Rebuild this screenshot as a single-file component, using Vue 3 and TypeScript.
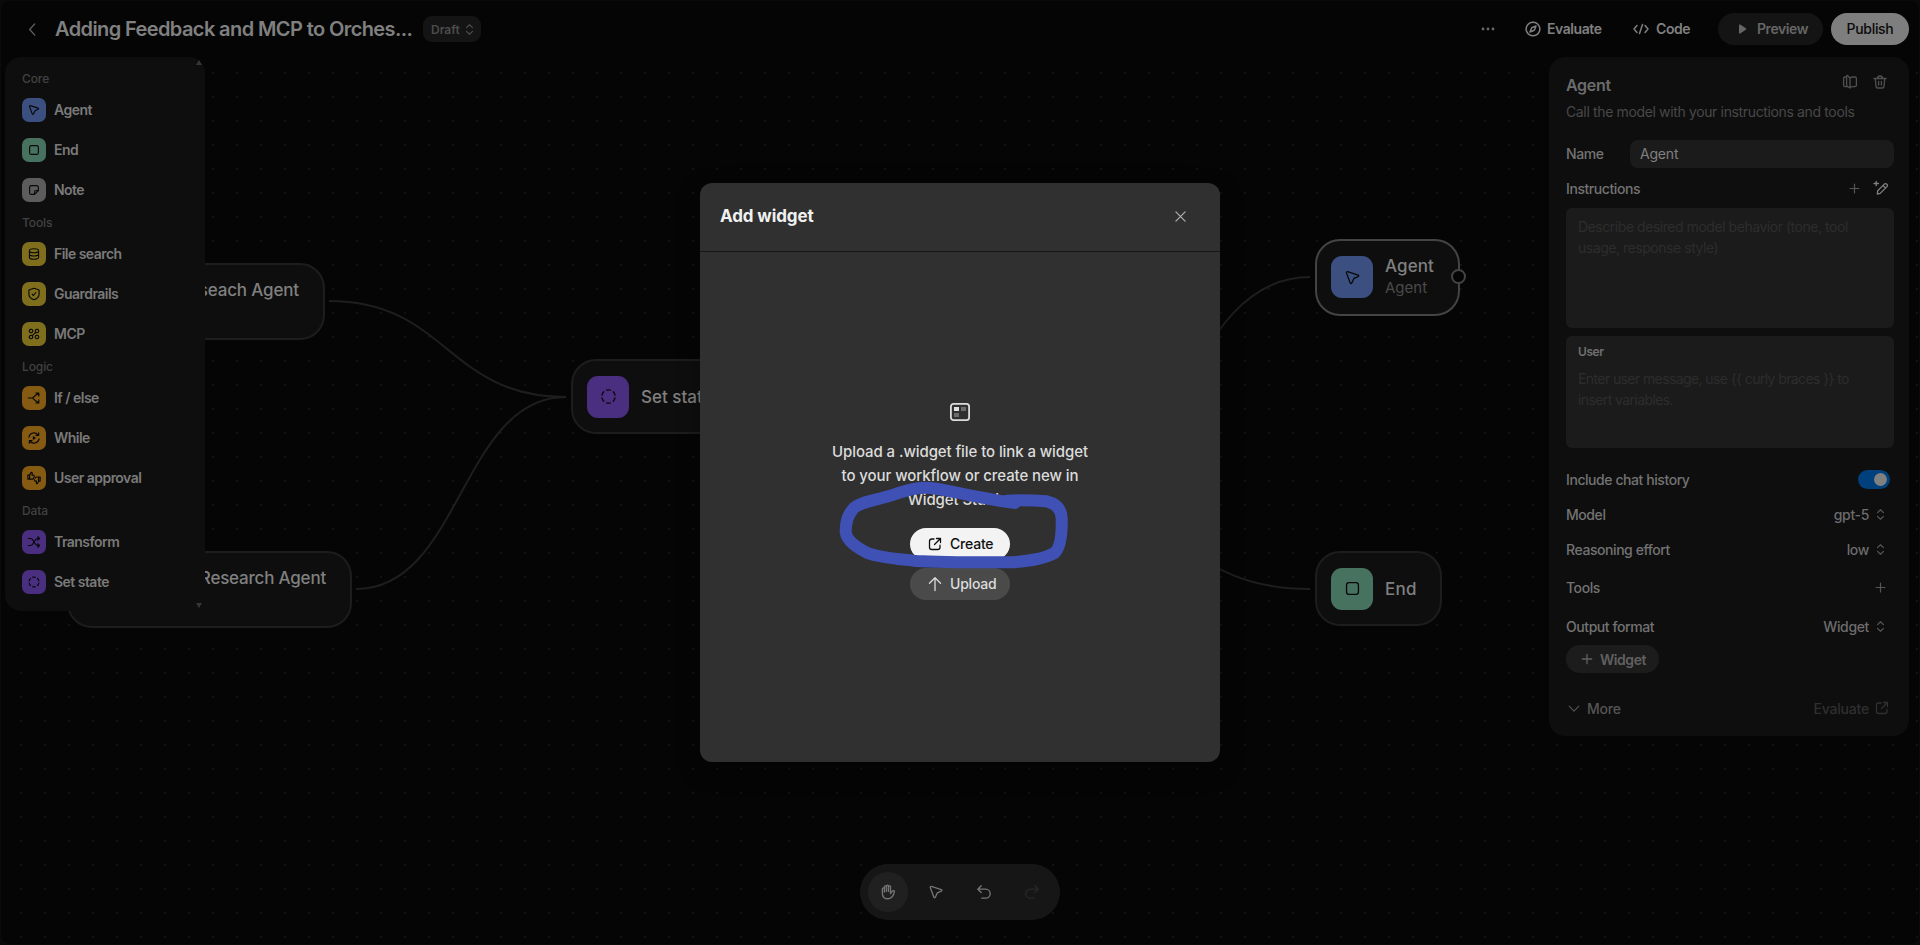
<script setup lang="ts">
interface Item { label: string; icon: string; tone: string }
interface Group { title: string; items: Item[] }

const groups: Group[] = [
  { title: 'Core', items: [
    { label: 'Agent', icon: 'cursor', tone: 'blue' },
    { label: 'End', icon: 'square', tone: 'green' },
    { label: 'Note', icon: 'note', tone: 'gray' },
  ] },
  { title: 'Tools', items: [
    { label: 'File search', icon: 'db', tone: 'yellow' },
    { label: 'Guardrails', icon: 'shield', tone: 'yellow' },
    { label: 'MCP', icon: 'mcp', tone: 'yellow' },
  ] },
  { title: 'Logic', items: [
    { label: 'If / else', icon: 'branch', tone: 'orange' },
    { label: 'While', icon: 'loop', tone: 'orange' },
    { label: 'User approval', icon: 'thumbs', tone: 'orange' },
  ] },
  { title: 'Data', items: [
    { label: 'Transform', icon: 'shuffle', tone: 'purple' },
    { label: 'Set state', icon: 'dashed', tone: 'purple' },
  ] },
]

// 16 × 16 stroke paths
const icons: Record<string, string> = {
  cursor: 'M3.9 3 12.7 5.9Q13.8 6.5 12.7 7.2L9.2 8.8 7.4 12.6Q6.7 13.6 6.1 12.6L2.9 4.1Q2.8 2.9 3.9 3Z',
  square: 'M5 3H11Q13 3 13 5V11Q13 13 11 13H5Q3 13 3 11V5Q3 3 5 3Z',
  note: 'M8.6 13H5Q3 13 3 11V5Q3 3 5 3H11Q13 3 13 5V8.6L8.6 13V10.4Q8.6 8.6 10.4 8.6H13',
  db: 'M2.800 4.300C2.800 2.900 5 2 8 2s5.200.9 5.200 2.300-2.200 2.300-5.200 2.300-5.200-.9-5.200-2.300V11.700c0 1.400 2.200 2.300 5.200 2.300s5.200-.9 5.200-2.300V4.300M2.800 8c0 1.400 2.200 2.300 5.200 2.300s5.200-.9 5.200-2.300',
  shield: 'M8 1.500 13.800 3.500V8.200C13.800 11.300 11.200 13.400 8 14.600 4.800 13.400 2.200 11.300 2.200 8.200V3.500ZM6 8.300 7.400 9.700 10 6.300',
  mcp: 'M4.600 2.600a2 2 0 1 0 .01 0M11.400 2.600a2 2 0 1 0 .01 0M4.600 9.400a2 2 0 1 0 .01 0M11.400 9.400a2 2 0 1 0 .01 0M9.900 6.100 6.100 9.900',
  branch: 'M1.500 8H6.500L9 5.500 13.300 2.500M6.500 8 9 10.500 13.300 13.500M10 2.300H13.500V5.800M10 13.700H13.500V10.200',
  loop: 'M2.200 7A5.900 5.900 0 0 1 12.900 4.700M13.800 9A5.900 5.900 0 0 1 3.100 11.300M13.300 2V5H10.300M2.700 14V11H5.700M7.300 6.700V9.300L9.300 8Z',
  thumbs: 'M1 4.800V9.300H6.200Q7.500 9.300 7.800 8L8.200 6Q8.300 4.700 7 4.700H5.700L6 2.500Q5.700 1 4.600 1.800L3 4.700H1M3 4.800V9.300M15 11.200V6.800H11Q9.800 6.800 9.500 8M8.600 10Q8.300 11.500 9.600 11.500H10.900L10.600 13.700Q10.900 15.100 11.900 14.300L13.400 11.500H15M13.200 6.800V11.500',
  shuffle: 'M1.500 4H3.700Q5.200 4 6.100 5L10 10.800Q10.800 12 12.300 12H14M1.500 12H3.700Q5.200 12 6.100 11L10 5.200Q10.800 4 12.300 4H14M12.200 2 14.300 4 12.200 6M12.200 10 14.300 12 12.200 14',
  dashed: 'M6.400 2.600A5.600 5.600 0 0 1 9.600 2.600M12 4A5.600 5.600 0 0 1 13.500 6.800M13.500 9.200A5.600 5.600 0 0 1 12 12M9.600 13.400A5.600 5.600 0 0 1 6.400 13.400M4 12A5.600 5.600 0 0 1 2.500 9.200M2.500 6.800A5.600 5.600 0 0 1 4 4',
  updown: 'M4.800 6 8 3 11.200 6M4.800 10 8 13 11.200 10',
  plus: 'M8 3.300V12.700M3.300 8H12.700',
  external: 'M7 3H4.800Q2.500 3 2.500 5.300V11.200Q2.500 13.500 4.800 13.500H10.700Q13 13.500 13 11.200V9.200M9.500 2.500H13.500V6.500M13.500 2.500 7.500 8.500',
  undo: 'M5.500 2.500 2.500 5.500 5.500 8.500M2.500 5.500H9.500A4 4 0 0 1 9.500 13.500H6',
  redo: 'M10.500 2.500 13.500 5.500 10.500 8.500M13.500 5.500H6.500A4 4 0 0 0 6.500 13.500H10',
  hand: 'M3 9V5.200Q3 4.300 3.900 4.300T4.800 5.200V8M4.800 7.500V3.500Q4.800 2.600 5.700 2.600T6.600 3.500V7.500M6.600 7V2.800Q6.600 1.900 7.500 1.900T8.400 2.800V7.500M8.400 7V3.400Q8.400 2.500 9.300 2.500T10.200 3.400V9.500M10.200 9.300 11.800 7.200Q13 6.300 13.700 7.300 12.600 14 8.200 14 3 14 3 9',
  trash: 'M2 4.500H14M5.500 4.300Q5.500 2 8 2T10.500 4.300M3.300 4.700 4 12.300Q4.200 14 5.800 14H10.200Q11.800 14 12 12.300L12.700 4.700M6.600 7.500V11M9.400 7.500V11',
  book: 'M5.800 1.600Q4.600 1 4.600 2.500V11Q4.600 12 5.500 12.500L8 14V4.600ZM4.600 3H3Q1.600 3 1.600 4.400V11.200Q1.600 12.600 3 12.600H5.500M8 4.600Q8.300 3 10 3H13Q14.400 3 14.400 4.400V11.200Q14.400 12.600 13 12.600H10Q8.400 12.600 8 14',
  magic: 'M4.300 14.200 4.700 10.800 11.300 4.100Q12.500 3.100 13.800 4.200T13.700 6.900L7.200 13.400ZM10 5.500 12.400 7.900M3.200 1.300V5.700M1 3.500H5.400',
  compass: 'M8 1.200a6.800 6.800 0 1 0 .01 0M11 5 9.300 9.300 5 11 6.700 6.700Z',
  code: 'M4 4.500 1 8 4 11.500M12 4.500 15 8 12 11.500M9.500 3.500 6.500 12.500',
}

const settings = [
  { label: 'Model', value: 'gpt-5' },
  { label: 'Reasoning effort', value: 'low' },
]
const userHint = 'Enter user message, use {{ curly braces }} to insert variables.'
</script>

<template>
  <div class="screen">
    <main class="canvas">
      <div class="dots"></div>
      <svg class="edges" width="1920" height="945" viewBox="0 0 1920 945">
        <path d="M329 301C447 301 447 397 566 397" />
        <path d="M356 589C461 589 461 397 566 397" />
        <path d="M1054 503C1182 503 1182 277 1310 277" />
        <path d="M1054 503C1182 503 1182 589 1310 589" />
      </svg>
      <div class="node research-a"><div class="ntext"><b>Reseach Agent</b></div></div>
      <div class="node research-b"><div class="ntext"><b>Research Agent</b></div></div>
      <div class="node state">
        <span class="tile purple"><svg viewBox="0 0 16 16"><path :d="icons.dashed" /></svg></span>
        <div class="ntext"><b>Set state</b></div>
      </div>
      <div class="node agent">
        <span class="tile blue"><svg viewBox="0 0 16 16"><path :d="icons.cursor" /></svg></span>
        <div class="ntext"><b>Agent</b><small>Agent</small></div>
        <i class="port"></i>
      </div>
      <div class="node end">
        <span class="tile green"><svg viewBox="0 0 16 16"><path :d="icons.square" /></svg></span>
        <div class="ntext"><b>End</b></div>
      </div>
    </main>

    <div class="chrome">
      <header class="top">
        <svg class="back" viewBox="0 0 8 14"><path d="M7 1 1.500 7 7 13" /></svg>
        <h1>Adding Feedback and MCP to Orches...</h1>
        <span class="draft">Draft <svg viewBox="0 0 16 16"><path :d="icons.updown" /></svg></span>
        <div class="actions">
          <svg class="more" viewBox="0 0 14 4"><circle cx="2" cy="2" r="1.400" /><circle cx="7" cy="2" r="1.400" /><circle cx="12" cy="2" r="1.400" /></svg>
          <span class="act ev"><svg viewBox="0 0 16 16"><path :d="icons.compass" /></svg><em>Evaluate</em></span>
          <span class="act cd"><svg viewBox="0 0 16 16"><path :d="icons.code" /></svg><em>Code</em></span>
          <button class="preview"><svg viewBox="0 0 8 10"><path d="M.5 1.300Q.5 0 1.700.6L7.300 4.200Q8.200 5 7.300 5.800L1.700 9.400Q.5 10 .5 8.700Z" /></svg><em>Preview</em></button>
          <button class="publish"><em>Publish</em></button>
        </div>
      </header>

      <div class="body">
        <aside class="palette">
          <section v-for="g in groups" :key="g.title">
            <h2>{{ g.title }}</h2>
            <div v-for="i in g.items" :key="i.label" class="item">
              <span class="chip" :class="i.tone"><svg viewBox="0 0 16 16"><path :d="icons[i.icon]" /></svg></span>
              <span class="cap">{{ i.label }}</span>
            </div>
          </section>
          <i class="arrow up"></i><i class="arrow down"></i>
        </aside>

        <aside class="props">
          <div class="phead">
            <h3>Agent</h3>
            <svg viewBox="0 0 16 16"><path :d="icons.book" /></svg>
            <svg viewBox="0 0 16 16"><path :d="icons.trash" /></svg>
          </div>
          <p class="desc">Call the model with your instructions and tools</p>
          <div class="row name"><label>Name</label><div class="input">Agent</div></div>
          <div class="row instr"><label>Instructions</label>
            <svg class="plus" viewBox="0 0 16 16"><path :d="icons.plus" /></svg>
            <svg class="magic" viewBox="0 0 16 16"><path :d="icons.magic" /></svg>
          </div>
          <div class="area first">Describe desired model behavior (tone, tool usage, response style)</div>
          <div class="area second"><strong>User</strong>{{ userHint }}</div>
          <div class="row chat"><label>Include chat history</label><span class="toggle"><i></i></span></div>
          <div v-for="s in settings" :key="s.label" class="row set">
            <label>{{ s.label }}</label><span class="val">{{ s.value }}</span>
            <svg class="ud" viewBox="0 0 16 16"><path :d="icons.updown" /></svg>
          </div>
          <div class="row tools"><label>Tools</label><svg class="plus last" viewBox="0 0 16 16"><path :d="icons.plus" /></svg></div>
          <div class="row out"><label>Output format</label><span class="val">Widget</span>
            <svg class="ud" viewBox="0 0 16 16"><path :d="icons.updown" /></svg>
          </div>
          <div class="wbtn"><svg viewBox="0 0 16 16"><path :d="icons.plus" /></svg><span>Widget</span></div>
          <div class="row foot">
            <svg class="chev" viewBox="0 0 12 8"><path d="M.5 1.200 6 7 11.500 1.200" /></svg><span>More</span>
            <span class="eval">Evaluate</span><svg class="ext" viewBox="0 0 16 16"><path :d="icons.external" /></svg>
          </div>
        </aside>
      </div>
    </div>

    <nav class="dock">
      <span class="on"><svg viewBox="0 0 16 16"><path :d="icons.hand" /></svg></span>
      <span><svg viewBox="0 0 16 16"><path :d="icons.cursor" /></svg></span>
      <span><svg viewBox="0 0 16 16"><path :d="icons.undo" /></svg></span>
      <span class="off"><svg viewBox="0 0 16 16"><path :d="icons.redo" /></svg></span>
    </nav>

    <div class="modal">
      <div class="mhead"><h2>Add widget</h2><svg viewBox="0 0 12 12"><path d="M1 1 11 11M11 1 1 11" /></svg></div>
      <div class="mbody">
        <svg class="widget" viewBox="0 0 20 18">
          <rect x=".9" y=".9" width="18.200" height="16.200" rx="2.600" />
          <path class="hi" d="M4 4H9V8H4Z" /><path class="lo" d="M11 4H16V8H11ZM4 10H9V14H4Z" />
        </svg>
        <p><span>Upload a .widget file to link a widget</span><span>to your workflow or create new in</span><span>Widget Studio.</span></p>
        <button class="create"><svg viewBox="0 0 16 16"><path :d="icons.external" /></svg><em>Create</em></button>
        <button class="upload"><svg viewBox="0 0 16 16"><path d="M8 14.500V2M2.500 7.300 8 1.800 13.500 7.300" /></svg><em>Upload</em></button>
      </div>
    </div>

    <svg class="marker" viewBox="0 0 840 720">
      <path d="M585 369C540 365 490 352 450 346C400 336 350 323 318 323C265 323 245 338 205 349C160 362 115 368 100 386C80 408 77 430 77 456C80 485 115 505 145 520C190 535 250 538 290 543C370 548 500 547 580 547C620 543 670 538 705 518C724 498 726 450 725 415C724 385 705 370 680 364C640 361 600 360 560 362" />
    </svg>
  </div>
</template>

<style>
body { margin: 0; background: #0a0a0a; overflow: hidden; }
</style>

<style scoped>
.screen { position: relative; width: 1920px; height: 945px; overflow: hidden; background: #0a0a0a; font-family: Inter, "Liberation Sans", sans-serif; font-size: 14px; font-weight: 500; color: #808080; letter-spacing: -.2px; box-sizing: border-box; }
.screen * { box-sizing: border-box; }
h1, h2, h3, p { margin: 0; }
em, i { font-style: normal; }
svg { display: block; fill: none; stroke: currentColor; stroke-width: 1.300; stroke-linecap: round; stroke-linejoin: round; flex: none; }
button { border: 0; padding: 0; font: inherit; color: inherit; letter-spacing: inherit; display: flex; align-items: center; }
button em { padding-bottom: 1px; }

.canvas { position: absolute; inset: 1px; border-radius: 9px; background: #050505; overflow: hidden; }
.dots { height: 100%; margin-top: 59px; background-image: radial-gradient(circle, #121212 0, #121212 .7px, transparent 1.100px); background-size: 24px 24px; background-position: 8px 1px; }
.edges { position: absolute; left: -1px; top: -1px; stroke: #1e1e1e; stroke-width: 2; stroke-linecap: butt; }
.node { position: absolute; margin: -1px; display: flex; align-items: center; gap: 12px; padding-left: 14px; background: #0e0e0e; border: 2px solid #1d1d1d; border-radius: 25px; }
.ntext { display: flex; flex-direction: column; letter-spacing: 0; }
.ntext b { font-size: 17px; line-height: 22px; font-weight: 500; letter-spacing: 0; white-space: nowrap; }
.ntext small { font-size: 15px; line-height: 20px; font-weight: 400; color: #4a4a4a; }
.research-a { left: 100px; top: 263px; width: 225px; height: 77px; justify-content: flex-end; padding: 0 24px 24px 0; }
.research-b { left: 67px; top: 551px; width: 285px; height: 77px; justify-content: flex-end; padding: 0 24px 24px 0; }
.research-a b { letter-spacing: -.15px; }
.research-b b { letter-spacing: -.2px; }
.state { left: 571px; top: 359px; width: 170px; height: 75px; }
.agent { left: 1315px; top: 239px; width: 145px; height: 77px; border-color: #444; padding-bottom: 1px; }
.agent small { padding-top: 1px; }
.agent .ntext { padding-bottom: 1px; }
.agent b { letter-spacing: .1px; }
.end { left: 1315px; top: 551px; width: 127px; height: 75px; }
.end b { letter-spacing: .3px; }
.tile { width: 42px; height: 42px; border-radius: 11px; display: grid; place-items: center; color: #080808; }
.tile svg { width: 19px; height: 19px; stroke-width: 1.100; }
.port { position: absolute; right: -8px; top: 28px; width: 15px; height: 15px; border-radius: 50%; border: 2px solid #444; background: #050505; }
.blue { background: #3b5080; } .green { background: #47725f; } .gray { background: #5c5c5c; }
.yellow { background: #7f6f1d; } .orange { background: #855a12; } .purple { background: #4a2e80; }

.chrome { position: relative; display: flex; flex-direction: column; }
.top { height: 57px; padding: 1px 11px 0 28px; display: flex; align-items: center; }
.back { width: 8px; height: 13px; margin-right: 19px; color: #666; }
h1 { font-size: 20px; font-weight: 600; letter-spacing: -.6px; width: 368px; white-space: nowrap; line-height: 28px; }
.draft { width: 58px; height: 26px; border-radius: 9px; background: #141414; color: #4c4c4c; font-size: 12px; font-weight: 600; letter-spacing: 0; display: flex; align-items: center; justify-content: space-between; padding: 0 4px 0 8px; }
.draft svg { width: 15px; height: 15px; }
.actions { margin-left: auto; display: flex; align-items: center; font-weight: 600; letter-spacing: -.42px; }
.more { width: 14px; height: 4px; margin-right: 30px; fill: #696969; stroke: none; }
.act { display: flex; align-items: center; }
.act em { padding-bottom: 1px; }
.act svg { width: 16px; height: 16px; margin-right: 6px; stroke-width: 1.500; }
.ev { width: 108px; } .cd { width: 85px; }
.cd svg { margin-right: 7px; }
.preview { width: 105px; height: 32px; border-radius: 16px; background: #141414; color: #666; padding-left: 20px; margin-right: 8px; }
.preview svg { width: 9px; height: 10px; fill: #666; stroke: none; margin-right: 10px; }
.publish { width: 78px; height: 32px; border-radius: 16px; background: #7e7e7e; color: #0a0a0a; justify-content: center; font-weight: 500; letter-spacing: -.3px; }

.body { display: flex; justify-content: space-between; align-items: flex-start; padding: 0 11px 0 5px; }
.palette { position: relative; width: 200px; height: 554px; background: #0e0e0e; border-radius: 16px; padding: 9px 17px; }
.palette h2 { height: 24px; line-height: 26px; font-size: 12px; font-weight: 500; color: #424242; letter-spacing: -.1px; }
.item { height: 40px; display: flex; align-items: center; gap: 8px; letter-spacing: -.53px; font-weight: 600; color: #7a7a7a; }
.cap { padding-bottom: 1px; }
.chip { width: 24px; height: 24px; border-radius: 7px; display: grid; place-items: center; color: #080808; }
.chip svg { width: 14px; height: 14px; }
.arrow { position: absolute; left: 191px; border: 3px solid transparent; }
.up { top: 0; border-bottom: 5px solid #363636; }
.down { bottom: 0; border-top: 5px solid #363636; }

.props { width: 360px; height: 679px; background: #0e0e0e; border-radius: 16px; padding: 16px 15px 0 17px; display: flex; flex-direction: column; }
.phead { display: flex; height: 26px; }
.phead h3 { flex: 1; font-size: 16px; font-weight: 600; line-height: 25px; letter-spacing: -.3px; color: #6c6c6c; }
.phead svg { width: 16px; height: 16px; margin: 1px 5px 0 9px; color: #505050; }
.phead svg:last-child { margin-right: 6px; }
.desc { font-weight: 400; color: #484848; line-height: 24px; padding-top: 1px; letter-spacing: -.36px; white-space: nowrap; }
.row { display: flex; align-items: center; flex: none; }
label { flex: 1; color: #737373; letter-spacing: -.43px; font-weight: 550; }
.name { height: 28px; margin-top: 16px; }
.name label { flex: none; width: 64px; padding-bottom: 2px; }
.input { width: 264px; height: 28px; border-radius: 8px; background: #1b1b1b; padding-left: 10px; line-height: 28px; font-weight: 400; }
.instr { height: 40px; padding-right: 5px; }
.plus { width: 15px; height: 15px; color: #555; margin-right: 11px; }
.plus.last { margin-right: 6px; }
.magic { width: 16px; height: 16px; }
.area { background: #1b1b1b; border-radius: 6px; padding: 8px 12px 0; line-height: 21px; color: #2d2d2d; font-weight: 400; letter-spacing: -.46px; }
.first { height: 120px; }
.second { height: 112px; margin-top: 8px; padding-top: 6px; letter-spacing: -.6px; }
.area strong { display: block; font-size: 12px; font-weight: 600; letter-spacing: -.4px; color: #707070; height: 26px; line-height: 20px; }
.chat { height: 35px; margin-top: 14px; padding-right: 4px; }
.chat label, .set label { padding-bottom: 1px; }
.toggle { width: 32px; height: 19px; border-radius: 10px; background: #00417d; padding: 3px; display: flex; justify-content: flex-end; }
.toggle i { width: 13px; height: 13px; border-radius: 50%; background: #808080; }
.set { height: 35px; }
.val { color: #6c6c6c; margin-right: 4px; letter-spacing: -.35px; font-weight: 550; }
.ud { width: 15px; height: 15px; color: #555; margin-right: 6px; }
.tools { height: 41px; }
.out { height: 36px; }
.wbtn { width: 93px; height: 28px; flex: none; border-radius: 14px; background: #1c1c1c; color: #606060; display: flex; align-items: center; padding-left: 13px; gap: 6px; font-weight: 600; letter-spacing: -.45px; margin-top: 1px; }
.wbtn svg { width: 16px; height: 16px; margin-right: -1px; }
.foot { height: 24px; margin-top: 23px; color: #555; }
.chev { width: 12px; height: 7px; margin: 0 7px 0 2px; }
.eval { margin-left: auto; color: #2f2f2f; }
.ext { width: 16px; height: 16px; margin: 0 4px 0 5px; color: #303030; }

.dock { position: absolute; left: 860px; top: 864px; width: 200px; height: 56px; border-radius: 28px; background: #161616; display: flex; align-items: center; padding: 0 8px; gap: 8px; color: #747474; }
.dock span { width: 40px; height: 40px; border-radius: 50%; display: grid; place-items: center; }
.dock svg { width: 18px; height: 18px; stroke-width: 1.200; }
.dock .on { background: #202020; }
.dock .off { color: #282828; }

.modal { position: absolute; left: 700px; top: 183px; width: 520px; height: 579px; border-radius: 12px; background: #303030; color: #dcdcdc; display: flex; flex-direction: column; box-shadow: 0 8px 24px rgba(0, 0, 0, .3); }
.mhead { height: 69px; border-bottom: 1px solid #161616; display: flex; justify-content: space-between; padding: 0 34px 1px 20px; align-items: center; }
.mhead h2 { font-size: 17px; font-weight: 650; letter-spacing: -.1px; color: #f0f0f0; padding-bottom: 1px; }
.mhead svg { width: 11px; height: 11px; color: #b0b0b0; }
.mbody { display: flex; flex-direction: column; align-items: center; padding-top: 151px; }
.widget { width: 20px; height: 18px; stroke-width: 1.800; }
.widget .hi { fill: #e0e0e0; stroke: none; }
.widget .lo { fill: #6c6c6c; stroke: none; }
.mbody p { margin-top: 19px; font-size: 15px; line-height: 24px; text-align: center; letter-spacing: -.09px; }
.mbody p span { display: block; white-space: nowrap; }
.mbody button { width: 100px; height: 32px; border-radius: 16px; padding-left: 17px; }
.mbody button svg { width: 16px; height: 16px; margin-right: 7px; }
.create { margin-top: 16px; background: #f3f3f3; color: #101010; }
.upload { margin-top: 8px; background: #4a4a4a; }
.marker { position: absolute; left: 820px; top: 380px; width: 280px; height: 240px; stroke: #3f51b5; stroke-width: 36; }
</style>
